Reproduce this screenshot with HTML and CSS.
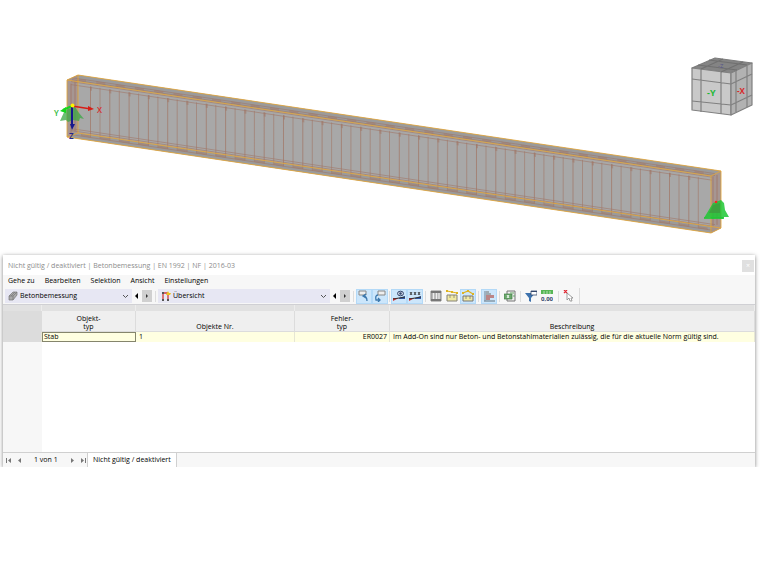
FILE: index.html
```html
<!DOCTYPE html>
<html lang="de">
<head>
  <meta charset="utf-8">
  <title>Betonbemessung</title>
  <link rel="stylesheet" href="styles.css">
</head>
<body>

  <svg class="model" viewBox="0 0 760 254" role="img" aria-label="Stabmodell">
    <!-- beam body -->
    <path fill="#a8a8a8" d="M67 80 78 75 721 171 721 228 711 233 67 137Z"/>
    <path fill="#9b9b9b" d="M67 80 78 75 721 171 711 176ZM67 137 78 133 721 228 711 233Z"/>
    <path fill="#a58f89" opacity=".7" d="M67 80 78 75V133L67 137ZM711 176 721 171V228L711 233Z"/>
    <!-- reinforcement, drawn in the slope of the beam -->
    <g transform="translate(67 80) skewY(8.48)" fill="none" stroke="#a17868">
      <path stroke-width="51" stroke-dasharray="1 18.3" d="M23 28.500H640" opacity=".75"/>
      <path stroke-width="51" stroke-dasharray="1 18.3" d="M32.500 28.500H640" opacity=".6"/>
      <path stroke-width="4" stroke-dasharray="2 17.300" d="M23 5H640" opacity=".55"/>
      <path stroke-width=".7" opacity=".85" d="M5-3H648M5-1H648M4 1H645M4 4H645M4 50H645M4 54H645M6 48H648"/>
      <path stroke-width="2" stroke-dasharray="9 10.300" opacity=".5" d="M10-2H645M14 53H645"/>
      <path stroke-width=".8" d="M4 3V53M8 0V50M646 0V50M650-2V48"/>
    </g>
    <g fill="none" stroke="#e3a63a" opacity=".85">
      <path d="M67 80 711 176V233L67 137ZM78 75 721 171V228L78 133ZM67 80 78 75M711 176 721 171M711 233 721 228M67 137 78 133"/>
    </g>
    <!-- supports -->
    <path fill="#39a844" opacity=".75" d="M65 110 75 107 79 113 84 119 80 118 79 121 73 120 68 122 66 120 60 121Z"/>
    <g fill="#1fc734">
      <path opacity=".85" d="M713 203 721 200 724 203 725 210 729 217 724 217 723 219 717 218 712 219 710 217 704 218Z"/>
      <path fill="#3f9b3e" opacity=".8" d="M713 205 720 203V213L709 213Z"/>
      <path d="M704 217H724V219H704Z" opacity=".8"/>
    </g>
    <circle cx="716" cy="202" r="1.300" fill="#ff2020"/>
    <!-- axes -->
    <path d="M72 106 91 109" stroke="#d71d17" stroke-width="1.500"/>
    <path d="M88 106 94 109 88 111Z" fill="#d71d17"/>
    <path d="M72 106 63 110" stroke="#16d61e" stroke-width="2"/>
    <path d="M66 107 60 111 66 113Z" fill="#16d61e"/>
    <path d="M72 106V126" stroke="#17178d" stroke-width="2"/>
    <path d="M70 124H75L72 130Z" fill="#17178d"/>
    <circle cx="72.500" cy="105.500" r="2" fill="#fff200"/>
    <text class="axis red" x="97" y="113">X</text>
    <text class="axis green" x="54" y="116">Y</text>
    <text class="axis blue" x="69" y="139">Z</text>

    <!-- view cube -->
    <g stroke="#808080" stroke-width="1.200" stroke-linejoin="round">
      <path fill="#848484" stroke="#7c7c7c" d="M692 68 715 58 752 63 731 73Z"/>
      <path fill="#c9c9c9" d="M692 68 731 73V115L692 110Z"/>
      <path fill="#b2b2b2" d="M731 73 752 63V105L731 115Z"/>
      <path fill="none" d="M701 69V112M721 72V114M692 79 731 84 752 74M692 101 731 105 752 95M736 71V112M747 66V107"/>
      <path fill="none" stroke="#707070" d="M701 69 723 59M721 72 743 62M698 65 737 70M709 60 747 65"/>
    </g>
    <text class="face green" x="707" y="96">-Y</text>
    <text class="face red narrow" x="737" y="94">-X</text>
    <text class="face-top" x="718" y="68">-Z</text>
  </svg>

  <main class="window">
    <header class="titlebar">
      <h1>Nicht gültig / deaktiviert | Betonbemessung | EN 1992 | NF | 2016-03</h1>
      <button class="close" aria-label="Schließen">×</button>
    </header>

    <nav class="menu">
      <a href="#">Gehe zu</a>
      <a href="#">Bearbeiten</a>
      <a href="#">Selektion</a>
      <a href="#">Ansicht</a>
      <a href="#">Einstellungen</a>
    </nav>

    <div class="toolbar">
      <div class="combo combo-addon">
        <svg width="10" height="10" viewBox="0 0 10 10"><path fill="#aaa" stroke="#777" stroke-width=".7" d="M1 5 5 1H9V4L5 9H1ZM1 5H5V9M5 5 9 1M3 5 7 1"/></svg>
        <select aria-label="Add-On"><option>Betonbemessung</option></select>
        <svg class="chevron" width="7" height="5" viewBox="0 0 7 5"><path d="M1 1 3.500 3.500 6 1"/></svg>
      </div>
      <button class="step" aria-label="Vorheriges Add-On"><svg width="4" height="6" viewBox="0 0 4 6"><path d="M3 0V6L0 3Z"/></svg></button>
      <button class="step next" aria-label="Nächstes Add-On"><svg width="4" height="6" viewBox="0 0 4 6"><path d="M1 1V5L3 3Z"/></svg></button>
      <span class="sep wide"></span>
      <div class="combo combo-table">
        <svg width="10" height="10" viewBox="0 0 10 10"><path fill="none" stroke="#d03a3a" stroke-width="1.300" d="M2 2V9M7 3V9M1 2H7"/><path fill="#555" d="M1 1H3V3H1ZM1 8H3V10H1ZM6 8H8V10H6Z"/><path fill="#eec21a" d="M7 0 8 2H10L9 4H5L6 2Z"/></svg>
        <select aria-label="Tabelle"><option>Übersicht</option></select>
        <svg class="chevron" width="7" height="5" viewBox="0 0 7 5"><path d="M1 1 3.500 3.500 6 1"/></svg>
      </div>
      <button class="step" aria-label="Vorherige Tabelle"><svg width="4" height="6" viewBox="0 0 4 6"><path d="M3 0V6L0 3Z"/></svg></button>
      <button class="step next" aria-label="Nächste Tabelle"><svg width="4" height="6" viewBox="0 0 4 6"><path d="M1 1V5L3 3Z"/></svg></button>
      <span class="sep wide"></span>
      <button class="tool on" aria-label="Auswahl übernehmen"><svg viewBox="0 0 12 12"><path fill="#eee" stroke="#888" d="M1 1H8V5H1Z"/><path fill="none" stroke="#3c78ad" stroke-width="1.300" d="M8 4 5 6 8 8M5 6Q9 6 9 11"/></svg></button>
      <button class="tool on" aria-label="Auswahl anzeigen"><svg viewBox="0 0 12 12"><path fill="#eee" stroke="#888" d="M4 1H11V5H4Z"/><path fill="none" stroke="#3c78ad" stroke-width="1.300" d="M4 5Q1 5 2 10H6M4 8 6 10 4 12"/></svg></button>
      <span class="sep tight"></span>
      <button class="tool on" aria-label="Ergebnisse anzeigen"><svg viewBox="0 0 12 12"><path fill="#d63939" d="M0 11V8L6 8Z"/><path fill="#3157a5" d="M6 8 12 6V9H6Z"/><path stroke="#333" d="M0 9 12 7"/><ellipse cx="7.500" cy="3.500" rx="3" ry="2.300" fill="#ccd5e4" stroke="#34466b"/><circle cx="7.500" cy="3.500" r="1.200" fill="#34466b"/></svg></button>
      <button class="tool on" aria-label="Werte anzeigen"><svg viewBox="0 0 12 12"><path fill="#d63939" d="M0 11V8L6 8Z"/><path fill="#3157a5" d="M6 8 12 6V9H6Z"/><path stroke="#333" d="M0 9 12 7"/><path fill="none" stroke="#333" stroke-width=".9" d="M1 2 3 5M3 2 1 5M5 2 7 5M7 2 5 5M9 2 11 5M11 2 9 5"/></svg></button>
      <span class="sep"></span>
      <button class="tool" aria-label="Raster"><svg viewBox="0 0 12 12"><path fill="#bbb" stroke="#888" d="M1 1H11V11H1Z"/><path fill="#777" d="M1 1H11V3H1ZM1 9H11V11H1Z"/><path stroke="#eee" d="M3.500 3V9M6.500 3V9M9 3V9"/></svg></button>
      <button class="tool" aria-label="Maximalwerte"><svg viewBox="0 0 12 12"><path fill="#f0e9a4" stroke="#858276" d="M1 5H11V11H1Z"/><path stroke="#858276" stroke-width=".8" d="M4 5V8M8 5V8"/><path fill="none" stroke="#dfb31f" stroke-width="1.200" d="M1 1 6 2 11 3"/><path fill="#dfb31f" d="M0 0H2V2H0ZM5 1H7V3H5ZM10 2H12V4H10Z"/></svg></button>
      <button class="tool on" aria-label="Bemessungsstellen"><svg viewBox="0 0 12 12"><path fill="#f0e9a4" stroke="#777" d="M1 6H11V11H1Z"/><path stroke="#777" stroke-width=".8" d="M4 6V9M8 6V9"/><path fill="none" stroke="#dfb31f" stroke-width="1.200" d="M1 3 6 1 11 4"/><path fill="#dfb31f" d="M0 2H2V4H0ZM5 0H7V2H5ZM10 3H12V5H10Z"/></svg></button>
      <span class="sep"></span>
      <button class="tool on" aria-label="Diagramm"><svg viewBox="0 0 12 12"><path fill="none" stroke="#8599a8" stroke-width="1.300" d="M2 1V11M1 11H12"/><path fill="#9fabb3" d="M3 1H6V3H3ZM3 3H8V5H3Z"/><path fill="#bb8587" d="M3 5H11V8H3ZM3 8H7V10H3Z"/></svg></button>
      <span class="sep"></span>
      <button class="tool" aria-label="Excel-Export"><svg viewBox="0 0 12 12"><path fill="#eee" stroke="#777" d="M3 1H11V11H3Z"/><path fill="#6aa86b" stroke="#447e48" stroke-width=".7" d="M0 4H8V9H0Z"/><path stroke="#fff" stroke-width=".9" d="M3 5 5 8M5 5 3 8"/><path stroke="#6aa86b" d="M6 3H10M9 6H11"/></svg></button>
      <span class="sep"></span>
      <button class="tool" aria-label="Filter"><svg viewBox="0 0 12 12"><path fill="#3d72ad" d="M0 3H10L6 8V12L4 11V8Z"/><path fill="#fff" stroke="#34466b" stroke-width=".8" d="M6 1H12V5H6Z"/><path fill="#34466b" d="M6 1H12V2H6Z"/></svg></button>
      <button class="tool" aria-label="Dezimalstellen"><svg viewBox="0 0 12 12"><path fill="#57b655" d="M0 0H12V4H0Z"/><path stroke="#dcf2dc" stroke-width=".7" d="M3 1V4M6 1V4M9 1V4"/><text class="digits" x="0" y="11">0,00</text></svg></button>
      <span class="sep wide"></span>
      <button class="tool" aria-label="Auswahl aufheben"><svg viewBox="0 0 12 12"><path stroke="#e02a35" stroke-width="1.300" d="M1 0 4 3M4 0 1 3"/><path fill="#fff" stroke="#888" stroke-width=".8" d="M4 3V10L6 8 7 11 9 11 8 8H10Z"/></svg></button>
      <span class="sep end"></span>
    </div>

    <table class="grid">
      <colgroup><col class="c-row"><col class="c-type"><col class="c-no"><col class="c-error"><col></colgroup>
      <thead>
        <tr class="strip"><td></td><td></td><td></td><td></td><td></td></tr>
        <tr class="heads"><td></td><th>Objekt-<br>typ</th><th>Objekte Nr.</th><th>Fehler-<br>typ</th><th>Beschreibung</th></tr>
      </thead>
      <tbody>
        <tr class="record"><td></td><td class="active">Stab</td><td>1</td><td class="right">ER0027</td><td>Im Add-On sind nur Beton- und Betonstahlmaterialien zulässig, die für die aktuelle Norm gültig sind.</td></tr>
        <tr class="empty"><td></td><td colspan="4"></td></tr>
      </tbody>
    </table>

    <footer class="tabs">
      <div class="pager">
        <button aria-label="Erste"><svg width="5" height="5" viewBox="0 0 5 5"><path d="M0 0H1V5H0ZM5 0V5L2 2.500Z"/></svg></button>
        <button aria-label="Zurück"><svg width="5" height="5" viewBox="0 0 5 5"><path d="M4 0V5L1 2.500Z"/></svg></button>
        <span>1 von 1</span>
        <button aria-label="Weiter"><svg width="5" height="5" viewBox="0 0 5 5"><path d="M1 0V5L4 2.500Z"/></svg></button>
        <button aria-label="Letzte"><svg width="5" height="5" viewBox="0 0 5 5"><path d="M0 0V5L3 2.500ZM4 0H5V5H4Z"/></svg></button>
      </div>
      <button class="tab">Nicht gültig / deaktiviert</button>
    </footer>
  </main>

</body>
</html>
```

FILE: styles.css
```css
* {
  box-sizing: border-box;
}
body {
  margin: 0;
  background: #fff;
  color: #000;
  font-family: "Open Sans", "Noto Sans", sans-serif;
  font-size: 7px;
  line-height: 8px;
}
button, select {
  margin: 0;
  padding: 0;
  border: none;
  background: none;
  color: inherit;
  font: inherit;
}
.model {
  display: block;
  width: 100%;
}
.axis {
  font-size: 8px;
  font-weight: 600;
}
.face {
  font-size: 9px;
  font-weight: bold;
}
.narrow {
  font-size: 8px;
}
.face-top {
  font-size: 6px;
  fill: #55558a;
}
.red {
  fill: #d9292b;
}
.green {
  fill: #1fb833;
}
.blue {
  fill: #24248f;
}

/* result window */
.window {
  margin: 1px 5px 0 3px;
  background: #fff;
  box-shadow: 0 1px 4px rgba(0, 0, 0, 0.5);
}
.titlebar {
  display: flex;
  align-items: center;
  justify-content: space-between;
  height: 20px;
  padding: 2px 1px 0 5px;
}
.titlebar h1 {
  margin: 0;
  color: #8c8c8c;
  font-size: 7px;
  font-weight: normal;
}
.close {
  width: 12px;
  height: 12px;
  background: #e0e0e0;
  color: #fff;
}
.menu {
  display: flex;
  gap: 10px;
  height: 13px;
  padding: 2px 5px;
  background: #f7f7f7;
}
.menu a {
  color: inherit;
  text-decoration: none;
}

.toolbar {
  display: flex;
  align-items: center;
  height: 17px;
  padding: 0 2px;
  background: #f7f7f7;
  border-bottom: 1px solid #d0d0d4;
}
.combo {
  display: flex;
  align-items: center;
  height: 14px;
  padding: 0 3px;
  background: #e7e7f3;
}
.combo-addon {
  width: 127px;
}
.combo-table {
  width: 172px;
}
.combo select {
  flex: 1;
  min-width: 0;
  height: 14px;
  padding-left: 2px;
  line-height: 12px;
  appearance: none;
}
.chevron {
  fill: none;
  stroke: #555;
}
.step {
  display: flex;
  align-items: center;
  justify-content: center;
  width: 10px;
  height: 12px;
}
.next {
  background: #d0d0d0;
}
.next svg {
  fill: #333;
}
.sep {
  width: 1px;
  height: 11px;
  margin: 0 2px;
  background: #ddd;
}
.wide {
  margin: 0 2px 0 3px;
}
.tight {
  margin: 0 1px;
}
.end {
  height: 16px;
}
.tool {
  display: flex;
  align-items: center;
  justify-content: center;
  width: 16px;
  height: 15px;
}
.tool svg {
  flex: none;
  width: 12px;
  height: 12px;
}
.on {
  background: #cce6fb;
  border: 1px solid #b3d9f7;
}
.digits {
  font-size: 6px;
  font-weight: bold;
  fill: #34466b;
}

/* table */
.grid {
  width: 100%;
  table-layout: fixed;
  border-collapse: separate;
  border-spacing: 0;
}
.c-row {
  width: 39px;
}
.c-type {
  width: 94px;
}
.c-no {
  width: 159px;
}
.c-error {
  width: 95px;
}
.grid td, .grid th {
  padding: 0;
  font-weight: normal;
}
.strip td {
  height: 6px;
  background: #e1e1e1;
  border-right: 1px solid #ececec;
}
.heads td, .heads th {
  height: 21px;
  background: #efefef;
  border-right: 1px solid #dcdcdc;
  border-bottom: 1px solid #dcdcdc;
  vertical-align: bottom;
}
.heads td, .record td:first-child {
  background: #dcdcdc;
}
.grid .record td {
  height: 10px;
  padding: 0 2px 0 3px;
  background: #ffffe1;
  border-right: 1px solid #e6e6d4;
  white-space: nowrap;
}
.grid .record td:first-child {
  background: #dcdcdc;
}
.grid .record .active {
  padding: 0 1px;
  border: 1px solid #85856c;
}
.right {
  text-align: right;
}
.empty td {
  height: 110px;
}
.empty td:first-child {
  background: #f7f7f7;
}

.tabs {
  display: flex;
  height: 15px;
  background: #f7f7f7;
  border-top: 1px solid #d0d0d0;
}
.pager {
  display: flex;
  align-items: center;
  gap: 6px;
  width: 84px;
  padding-left: 3px;
}
.pager button {
  display: flex;
}
.pager svg {
  fill: #777;
}
.pager span {
  padding: 0 6px;
}
.tab {
  padding: 0 5px;
  background: #fff;
  border: solid #d0d0d0;
  border-width: 0 1px;
}
```
